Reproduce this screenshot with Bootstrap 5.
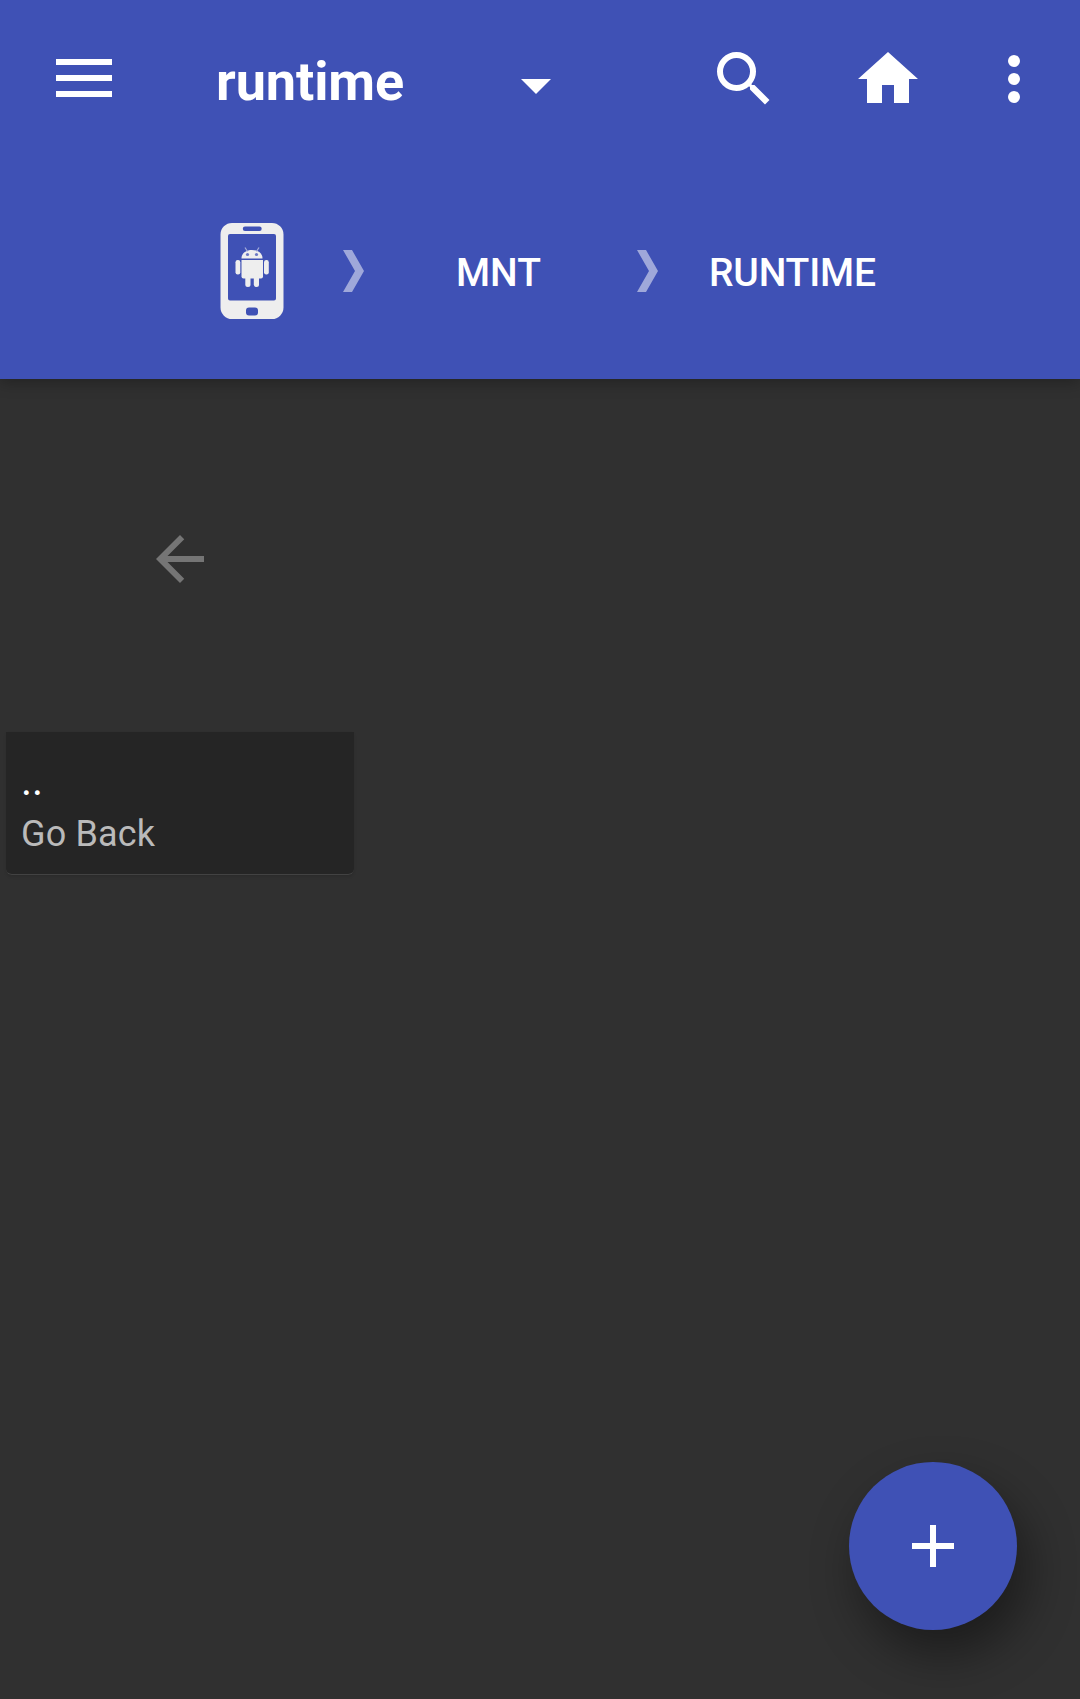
<!DOCTYPE html>
<html lang="en">
<head>
<meta charset="utf-8">
<meta name="viewport" content="width=device-width, initial-scale=1">
<title>runtime</title>
<link href="https://cdn.jsdelivr.net/npm/bootstrap@5.3.0/dist/css/bootstrap.min.css" rel="stylesheet">
<style>
  body { background: #303030; font-family: Roboto, "Liberation Sans", sans-serif; min-height: 1699px; overflow: hidden; }
  svg { display: block; flex: none; }
  .app-header { background: #3f51b5; height: 379px; box-shadow: 0 4px 14px rgba(0,0,0,.27); }
  .toolbar { height: 163px; padding: 0 30px 5px 48px; }
  .icon-btn { padding: 0; border: 0; background: none; color: #fff; line-height: 1; }
  .folder-select { margin-left: 96px; width: 335px; gap: 117px; }
  .folder-title { font-size: 54px; font-weight: 700; line-height: 64px; margin: 5px 0 0; letter-spacing: -.1px; }
  .caret-down { margin-top: 14px; }
  .toolbar-actions { gap: 72px; }
  .more-btn { margin-left: -18px; }
  .crumbs { height: 216px; padding-left: 220px; }
  .crumb { font-size: 39px; font-weight: 500; line-height: 46px; color: #fff; margin-top: 4px; text-decoration: none; }
  .crumb-sep { fill: #9fa8da; }
  .crumb-root { margin-right: 59px; }
  .crumb-parent { margin-left: 92px; width: 181px; }
  .crumb-current { margin-left: 51px; letter-spacing: -.2px; }
  .file-grid { padding: 105px 0 0 6px; }
  .file-tile { width: 348px; }
  .tile-icon { height: 248px; padding-left: 138px; padding-top: 39px; color: #757575; }
  .tile-caption { height: 143px; background: #252525; border-bottom: 1px solid #424242; border-radius: 0 0 6px 6px; padding: 27px 16px 0 15px; box-shadow: 0 2px 3px rgba(0,0,0,.1); }
  .tile-name { font-size: 42px; line-height: 44px; color: #fff; }
  .tile-sub { font-size: 36px; line-height: 43px; color: #bababa; margin-top: 10px; letter-spacing: .15px; }
  .fab { right: 63px; bottom: 69px; width: 168px; height: 168px; background: #3f51b5; box-shadow: 10px 24px 48px rgba(0,0,0,.42); }
</style>
</head>
<body>
<header class="app-header position-relative">
  <nav class="toolbar d-flex align-items-center">
    <button class="icon-btn" aria-label="Menu"><svg width="72" height="72" fill="currentColor"><path d="M8 16h56v6H8zM8 32h56v6H8zM8 48h56v6H8z"/></svg></button>
    <button class="icon-btn folder-select d-flex align-items-center">
      <span class="folder-title">runtime</span>
      <svg class="caret-down" width="30" height="15" fill="currentColor"><path d="M0 0h30L15 15z"/></svg>
    </button>
    <div class="toolbar-actions d-flex ms-auto">
      <button class="icon-btn" aria-label="Search"><svg width="72" height="72" viewBox="0 0 24 24" fill="currentColor"><path d="M15.5 14h-.79l-.28-.27A6.47 6.47 0 0 0 16 9.5 6.5 6.5 0 1 0 9.5 16c1.61 0 3.09-.59 4.23-1.57l.27.28v.79l5 4.99L20.49 19l-4.99-5zm-6 0a4.5 4.5 0 1 1 0-9 4.5 4.5 0 0 1 0 9z"/></svg></button>
      <button class="icon-btn" aria-label="Home"><svg width="72" height="72" viewBox="0 0 24 24" fill="currentColor"><path d="M10 20v-6h4v6h5v-8h3L12 3 2 12h3v8z"/></svg></button>
      <button class="icon-btn more-btn" aria-label="More"><svg width="72" height="72" viewBox="0 0 24 24" fill="currentColor"><circle cx="12" cy="6" r="2"/><circle cx="12" cy="12" r="2"/><circle cx="12" cy="18" r="2"/></svg></button>
    </div>
  </nav>
  <div class="crumbs d-flex align-items-center">
    <svg class="crumb-root" width="64" height="96" fill="#eee">
      <path fill-rule="evenodd" d="M12 0h40a11.500 11.500 0 0 1 11.500 11.500v73A11.500 11.500 0 0 1 52 96H12A11.500 11.500 0 0 1 .5 84.500v-73A11.500 11.500 0 0 1 12 0zM25 3.500a2.200 2.200 0 0 0 0 4.400h14.500a2.200 2.200 0 0 0 0-4.400zM10 11a2 2 0 0 0-2 2v62.500a2 2 0 0 0 2 2h44a2 2 0 0 0 2-2V13a2 2 0 0 0-2-2zM29 84.500a3 3 0 0 0-3 3v2a3 3 0 0 0 3 3h6a3 3 0 0 0 3-3v-2a3 3 0 0 0-3-3z"/>
      <path d="M21.500 35.500c0-5 4-8.500 10.500-8.500s10.500 3.500 10.500 8.500z"/>
      <path d="M27.500 28.500l-2.500-4M36.500 28.500l2.500-4" stroke="#a5add9" stroke-width="1.200"/>
      <circle cx="27.500" cy="31.500" r="1.600" fill="#6b78c4"/><circle cx="36.500" cy="31.500" r="1.600" fill="#6b78c4"/>
      <path d="M21.500 37h21.500v16.500q0 2-2 2h-17.500q-2 0-2-2z"/>
      <rect x="15.500" y="37" width="4.800" height="14.500" rx="2.200"/><rect x="44" y="37" width="4.800" height="14.500" rx="2.200"/>
      <rect x="25.300" y="50" width="5.200" height="14" rx="2.500"/><rect x="33.800" y="50" width="5.200" height="14" rx="2.500"/>
    </svg>
    <svg class="crumb-sep" width="21" height="42"><path d="M0 0h9l12 21L9 42H0l12-21z"/></svg>
    <a class="crumb crumb-parent">MNT</a>
    <svg class="crumb-sep" width="21" height="42"><path d="M0 0h9l12 21L9 42H0l12-21z"/></svg>
    <a class="crumb crumb-current">RUNTIME</a>
  </div>
</header>
<main class="file-grid">
  <div class="file-tile">
    <div class="tile-icon"><svg width="72" height="72" viewBox="0 0 24 24" fill="currentColor"><path d="M20 11H7.830l5.590-5.590L12 4l-8 8 8 8 1.410-1.410L7.830 13H20z"/></svg></div>
    <div class="tile-caption">
      <div class="tile-name">..</div>
      <div class="tile-sub">Go Back</div>
    </div>
  </div>
</main>
<button class="fab btn rounded-circle border-0 position-fixed d-flex align-items-center justify-content-center p-0" aria-label="Add"><svg width="42" height="42" fill="#fff"><path d="M18 0h6v18h18v6H24v18h-6V24H0v-6h18z"/></svg></button>
<script src="https://cdn.jsdelivr.net/npm/bootstrap@5.3.0/dist/js/bootstrap.bundle.min.js"></script>
</body>
</html>
